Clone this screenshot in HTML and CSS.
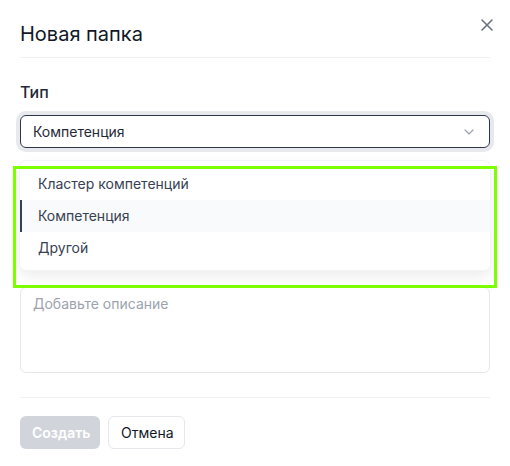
FILE: index.html
```html
<!DOCTYPE html>
<html lang="ru">
<head>
    <meta charset="UTF-8">
    <title>Новая папка</title>
    <meta name="viewport" content="width=device-width, initial-scale=1.0">
    <link rel="stylesheet" href="styles.css">
</head>
<body>
<div class="modal">
    <div class="modal-header">
        <h1>Новая папка</h1>
        <button class="close" type="button" aria-label="Закрыть">
            <svg width="12" height="12" viewBox="0 0 12 12"><path d="M1 1L11 11M11 1L1 11" stroke="#6b7280" stroke-width="1.6" stroke-linecap="round"/></svg>
        </button>
    </div>

    <form>
        <label class="field-label">Тип</label>
        <div class="select-wrap">
            <div class="select">
                <span>Компетенция</span>
                <svg width="10" height="6" viewBox="0 0 10 6"><path d="M1 1L5 5L9 1" stroke="#9ca3af" stroke-width="1.2" fill="none" stroke-linecap="round" stroke-linejoin="round"/></svg>
            </div>
            <ul class="options">
                <li>Кластер компетенций</li>
                <li class="active">Компетенция</li>
                <li>Другой</li>
            </ul>
        </div>

        <div class="desc">
            <textarea placeholder="Добавьте описание"></textarea>
        </div>

        <div class="footer">
            <button type="submit" class="btn btn-primary" disabled>Создать</button>
            <button type="button" class="btn btn-default">Отмена</button>
        </div>
    </form>
</div>
<div class="highlight"></div>
</body>
</html>
```

FILE: styles.css
```css
* {
    box-sizing: border-box;
}

body {
    margin: 0;
    background: #fff;
    font-family: Inter, "Noto Sans", sans-serif;
    color: #111827;
}

.modal {
    width: 510px;
    padding: 20px;
}

.modal-header {
    display: flex;
    justify-content: space-between;
    align-items: flex-start;
    padding-bottom: 9px;
    border-bottom: 1px solid #f0f1f3;
}

h1 {
    margin: 0;
    font-size: 20px;
    font-weight: 400;
    line-height: 28px;
}

.close {
    border: none;
    background: none;
    padding: 0;
    margin: -1px -3px 0 0;
    width: 12px;
    height: 12px;
    display: flex;
    cursor: pointer;
}

.field-label {
    display: block;
    margin-top: 22px;
    font-size: 16px;
    font-weight: 500;
    line-height: 24px;
    color: #1f2937;
}

.select-wrap {
    position: relative;
    margin-top: 11px;
}

.select {
    height: 33px;
    display: flex;
    align-items: center;
    justify-content: space-between;
    padding: 0 15px 0 12px;
    border: 1px solid #2d3748;
    border-radius: 6px;
    box-shadow: 0 0 0 4px #e8e9ec;
    font-size: 14px;
    color: #1f2937;
}

.options {
    position: absolute;
    left: 0;
    right: 0;
    top: calc(100% + 13px);
    margin: 0;
    padding: 7px 0 6px;
    list-style: none;
    background: #fff;
    border-radius: 6px;
    box-shadow: 0 0 0 1px #f3f4f6, 0 6px 14px rgba(0, 0, 0, 0.08);
    z-index: 2;
}

.options li {
    height: 32px;
    line-height: 32px;
    padding-left: 18px;
    font-size: 14px;
    color: #374151;
}

.options li.active {
    background: #f9fafb;
    border-left: 2px solid #334155;
    padding-left: 16px;
}

.desc {
    margin-top: 139px;
}

textarea {
    display: block;
    width: 100%;
    height: 86px;
    padding: 6px 12px;
    border: 1px solid #e5e7eb;
    border-radius: 6px;
    font-family: inherit;
    font-size: 14px;
    line-height: 20px;
    resize: none;
}

textarea::placeholder {
    color: #9ca3af;
}

.footer {
    display: flex;
    gap: 8px;
    margin-top: 24px;
    padding-top: 18px;
    border-top: 1px solid #f0f1f3;
}

.btn {
    height: 33px;
    border-radius: 6px;
    font-family: inherit;
    font-size: 14px;
    padding: 0 12px;
    cursor: pointer;
}

.btn-primary {
    width: 80px;
    border: none;
    background: #d1d5db;
    color: #fff;
    font-weight: 600;
}

.btn-default {
    width: 77px;
    border: 1px solid #e5e7eb;
    background: #fff;
    color: #111827;
}

.highlight {
    position: absolute;
    left: 13px;
    top: 166px;
    width: 484px;
    height: 122px;
    border: 3px solid #7cff00;
    pointer-events: none;
    z-index: 3;
}
```
